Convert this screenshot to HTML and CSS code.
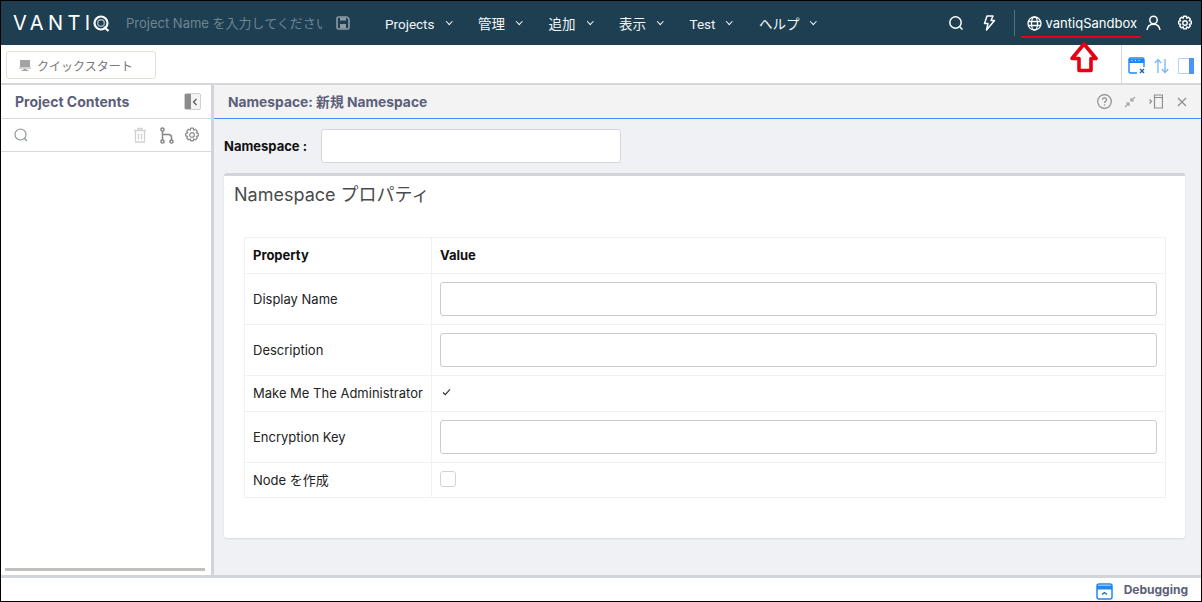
FILE: index.html
```html
<!DOCTYPE html>
<html lang="ja">
<head>
    <meta charset="UTF-8">
    <title>Namespace</title>
    <link rel="stylesheet" href="styles.css">
</head>
<body>
<div class="frame">
    <header class="topbar">
        <div class="logo">VANTI
            <svg class="logo-q" width="17" height="17" viewBox="0 0 17 17"><circle cx="8" cy="8" r="6.500" fill="none" stroke="#fff" stroke-width="2.200"/><circle cx="8" cy="8" r="3.300" fill="none" stroke="#9fb4bf" stroke-width="1.400"/><path d="M11 12l4.500 4" stroke="#fff" stroke-width="2.200"/></svg>
        </div>
        <input class="project-name" type="text" placeholder="Project Name を入力してください">
        <svg class="save-icon" width="14" height="14" viewBox="0 0 14 14"><path d="M1 2.500Q1 1 2.500 1H11l2 2v8.500Q13 13 11.500 13h-9Q1 13 1 11.500z" fill="none" stroke="#8b9ba5" stroke-width="1.600"/><path d="M4 1.500h6v3H4zM4 8h6v4.500H4z" fill="#8b9ba5"/></svg>
        <nav class="menu">
            <span class="menu-item">Projects<i class="caret"></i></span>
            <span class="menu-item">管理<i class="caret"></i></span>
            <span class="menu-item">追加<i class="caret"></i></span>
            <span class="menu-item">表示<i class="caret"></i></span>
            <span class="menu-item">Test<i class="caret"></i></span>
            <span class="menu-item">ヘルプ<i class="caret"></i></span>
        </nav>
        <div class="top-right">
            <svg class="ti-search" width="16" height="16" viewBox="0 0 16 16" fill="none" stroke="#fff" stroke-width="1.500"><circle cx="7.500" cy="7.500" r="5.700"/><path d="M11.700 11.700L14.500 14.500"/></svg>
            <svg class="ti-bolt" width="14" height="16" viewBox="0 0 14 16" fill="none" stroke="#fff" stroke-width="1.500" stroke-linejoin="round"><path d="M5 1h6L9 5.500h3.500L4.500 15l1.500-6.500H2.500z"/></svg>
            <span class="top-sep"></span>
            <svg class="ti-globe" width="15" height="15" viewBox="0 0 15 15" fill="none" stroke="#fff" stroke-width="1.300"><circle cx="7.500" cy="7.500" r="6.500"/><ellipse cx="7.500" cy="7.500" rx="3" ry="6.500"/><path d="M1 5.500h13M1 9.500h13"/></svg>
            <span class="ns-name">vantiqSandbox</span>
            <svg class="ti-user" width="15" height="16" viewBox="0 0 15 16" fill="none" stroke="#fff" stroke-width="1.500"><circle cx="7.500" cy="5" r="3.700"/><path d="M1 15c.5-3.500 3-5.800 6.500-5.800S13.500 11.500 14 15"/></svg>
            <svg class="ti-gear" width="16" height="16" viewBox="0 0 16 16" fill="none" stroke="#fff" stroke-width="1.400"><circle cx="8" cy="8" r="2.200"/><path d="M6.700 1.200h2.600l.4 2 1.700-1 1.900 1.900-1 1.700 2 .5v2.600l-2 .4 1 1.700-1.900 1.900-1.700-1-.4 2H6.700l-.4-2-1.800 1-1.800-1.900 1-1.700-2-.4V6.300l2-.5-1-1.700 1.800-1.900 1.800 1z" stroke-linejoin="round"/></svg>
        </div>
    </header>

    <div class="toolbar">
        <button class="quick-start">
            <svg width="12" height="13" viewBox="0 0 12 13" fill="#a3a3a3"><path d="M1 1h10v7H1z"/><path d="M0 8.500h12v1H0zM4.500 10h3v1h2v1h-7v-1h2z"/></svg>
            クイックスタート
        </button>
        <div class="toolbar-right">
            <svg width="17" height="17" viewBox="0 0 17 17" fill="none"><path d="M1 4h15" stroke="#1e88f5" stroke-width="4"/><path d="M3.500 3.500h1M7 3.500h1M10.500 3.500h1" stroke="#fff"/><path d="M9 16H2.500Q1 16 1 14.500v-12Q1 1 2.500 1h12Q16 1 16 2.500V10" stroke="#1e88f5" stroke-width="1.400"/><path d="M12 12l4 4M16 12l-4 4" stroke="#1565c0" stroke-width="1.400"/></svg>
            <svg width="15" height="16" viewBox="0 0 15 16" fill="none" stroke="#7cbcf5" stroke-width="1.400"><path d="M4 15V1.500M.8 5L4 1.500 7.200 5M11 1v13.500M7.800 11l3.200 3.500 3.200-3.500"/></svg>
            <svg width="16" height="16" viewBox="0 0 16 16"><path d="M.5.500h15v15H.5z" fill="#fff" stroke="#b5d2fa"/><path d="M11 0h5v16h-5z" fill="#4d94f7"/></svg>
        </div>
    </div>

    <div class="workspace">
        <aside class="side">
            <div class="side-title">
                <span>Project Contents</span>
                <span class="collapse-btn"><svg width="6" height="8" viewBox="0 0 6 8" fill="none" stroke="#555" stroke-width="1.200"><path d="M4.500 1L1.500 4l3 3"/></svg></span>
            </div>
            <div class="side-tools">
                <svg width="14" height="14" viewBox="0 0 14 14" fill="none" stroke="#8d9499" stroke-width="1.200"><circle cx="6.500" cy="6.500" r="5.500"/><path d="M10.500 10.500L13 13"/></svg>
                <span class="side-tools-right">
                    <svg class="tool-trash" width="14" height="16" viewBox="0 0 14 16" fill="none" stroke="#d2d2d2" stroke-width="1.300"><path d="M1 3.500h12M5 3.500V1.500h4v2M2.500 3.500V15h9V3.500M5.500 6.500v6M8.500 6.500v6"/></svg>
                    <svg width="14" height="17" viewBox="0 0 14 17" fill="none" stroke="#858585" stroke-width="1.500"><circle cx="2.500" cy="2.500" r="1.600"/><circle cx="2.500" cy="14.500" r="1.600"/><circle cx="11.500" cy="14.500" r="1.600"/><path d="M2.500 4v9M2.500 7.500h6q3 0 3 3V13"/></svg>
                    <svg class="tool-gear" width="16" height="16" viewBox="0 0 16 16" fill="none" stroke="#8a8a8a" stroke-width="1.200"><circle cx="8" cy="8" r="2.300"/><path d="M6.700 1.200h2.600l.4 2 1.700-1 1.900 1.900-1 1.700 2 .5v2.600l-2 .4 1 1.700-1.900 1.900-1.700-1-.4 2H6.700l-.4-2-1.800 1-1.800-1.900 1-1.700-2-.4V6.300l2-.5-1-1.700 1.800-1.900 1.800 1z" stroke-linejoin="round"/></svg>
                </span>
            </div>
            <div class="side-body"></div>
            <div class="side-scroll"></div>
        </aside>

        <main class="content">
            <div class="panel-head">
                <span class="panel-title">Namespace: 新規 Namespace</span>
                <span class="panel-icons">
                    <svg width="15" height="15" viewBox="0 0 15 15" fill="none" stroke="#8d8d8d" stroke-width="1.200"><circle cx="7.500" cy="7.500" r="6.800"/><path d="M5.500 5.800c0-2.600 4-2.600 4 0 0 1.500-2 1.500-2 3.200M7.500 10.300v1.300"/></svg>
                    <svg class="icon-shrink" width="12" height="12" viewBox="0 0 12 12" fill="none" stroke="#a0a0a0" stroke-width="1.200"><path d="M1 11l3.500-3.500M11 1L7.500 4.500M2 7h3v3M7 2v3h3"/></svg>
                    <svg width="14" height="15" viewBox="0 0 14 15" fill="none" stroke="#8d8d8d" stroke-width="1.200"><path d="M5.500 1h8v13h-8zM5.500 3.500h8"/><path d="M.5 5.500l2 2-2 2"/></svg>
                    <svg class="icon-close" width="10" height="10" viewBox="0 0 10 10" fill="none" stroke="#8d8d8d" stroke-width="1.200"><path d="M1 1l8 8M9 1l-8 8"/></svg>
                </span>
            </div>
            <div class="content-body">
                <div class="ns-row">
                    <label class="ns-label">Namespace :</label>
                    <input class="ns-input" type="text">
                </div>
                <section class="card">
                    <h2 class="card-title">Namespace プロパティ</h2>
                    <table class="props">
                        <thead>
                            <tr class="row-head"><th class="col-prop">Property</th><th>Value</th></tr>
                        </thead>
                        <tbody>
                            <tr class="row-input"><td>Display Name</td><td><input class="field" type="text"></td></tr>
                            <tr class="row-input"><td>Description</td><td><input class="field" type="text"></td></tr>
                            <tr class="row-small"><td>Make Me The Administrator</td><td><svg class="check" width="9" height="8" viewBox="0 0 9 8" fill="none" stroke="#333" stroke-width="1.100"><path d="M1 4.500L3.300 6.700 8 1.300"/></svg></td></tr>
                            <tr class="row-input"><td>Encryption Key</td><td><input class="field" type="text"></td></tr>
                            <tr class="row-small row-last"><td>Node を作成</td><td><span class="checkbox"></span></td></tr>
                        </tbody>
                    </table>
                </section>
            </div>
        </main>
    </div>

    <footer class="bottom">
        <svg class="debug-icon" width="17" height="17" viewBox="0 0 17 17" fill="none"><path d="M1 4.500h15" stroke="#1e88f5" stroke-width="4"/><rect x="1" y="1" width="15" height="15" rx="2" stroke="#1e88f5" stroke-width="1.500"/><path d="M6 11.500l2.500-2 2.500 2" stroke="#1565c0" stroke-width="1.300"/></svg>
        <span class="bottom-label">Debugging</span>
    </footer>

    <!-- red annotation over the screenshot -->
    <div class="mark-line"></div>
    <svg class="mark-arrow" width="28" height="31" viewBox="0 0 28 31" fill="#fff" stroke="#e60012" stroke-width="3.600" stroke-linejoin="round"><path d="M14 2L26 16.500h-5v12H9v-12H2z"/></svg>
</div>
</body>
</html>
```

FILE: styles.css
```css
* {
    box-sizing: border-box;
}

html, body {
    margin: 0;
    padding: 0;
    height: 100%;
    overflow: hidden;
}

body {
    font-family: Inter, "Noto Sans CJK JP", sans-serif;
    font-size: 13px;
    color: #222;
    background-color: #fff;
}

.frame {
    position: relative;
    width: 1202px;
    height: 602px;
    border: 1px solid #000;
    display: flex;
    flex-direction: column;
    overflow: hidden;
}

/* top bar */
.topbar {
    height: 44px;
    flex: none;
    background-color: #1d3f51;
    color: #fff;
    display: flex;
    align-items: center;
    padding-left: 12px;
}

.logo {
    width: 99px;
    font-size: 20px;
    font-weight: 400;
    letter-spacing: 4.4px;
    display: flex;
    align-items: center;
    flex: none;
    margin-top: -1px;
}

.logo-q {
    flex: none;
    margin-left: -2px;
    margin-top: 1px;
}

.project-name {
    width: 196px;
    margin-left: 14px;
    padding: 0;
    border: none;
    background: transparent;
    font-family: Inter, "Noto Sans CJK JP", sans-serif;
    font-size: 13px;
    flex: none;
}

.project-name::placeholder {
    color: #6f8591;
    opacity: 1;
}

.save-icon {
    margin-left: 14px;
    flex: none;
}

.menu {
    display: flex;
    margin-left: 35px;
    font-family: Roboto, "Noto Sans CJK JP", sans-serif;
    font-size: 13.500px;
    line-height: 18px;
    padding-top: 2px;
}

.menu-item {
    display: flex;
    align-items: center;
    color: #f2f4f5;
    margin-right: 27px;
}

.caret {
    width: 4.500px;
    height: 4.500px;
    border-right: 1.400px solid #fff;
    border-bottom: 1.400px solid #fff;
    transform: rotate(45deg);
    margin: -6px 0 0 12px;
}

.top-right {
    margin-left: auto;
    display: flex;
    align-items: center;
    padding-right: 8px;
}

.ti-bolt {
    margin-left: 18px;
}

.top-sep {
    width: 1px;
    height: 26px;
    background-color: #566f7c;
    margin: 0 12px 0 18px;
}

.ns-name {
    margin-left: 4px;
    font-size: 13px;
    color: #fff;
}

.ti-user {
    margin-left: 9px;
}

.ti-gear {
    margin-left: 16px;
}

/* toolbar */
.toolbar {
    height: 40px;
    flex: none;
    background-color: #fff;
    border-bottom: 2px solid #d7d7d7;
    display: flex;
    align-items: center;
    padding-left: 5px;
}

.quick-start {
    width: 150px;
    height: 28px;
    margin-top: 2px;
    background-color: #fff;
    border: 1px solid #dbe5d2;
    border-radius: 3px;
    font-family: Inter, "Noto Sans CJK JP", sans-serif;
    font-size: 12px;
    color: #777;
    display: flex;
    align-items: center;
    gap: 6px;
    padding: 0 0 0 12px;
}

.toolbar-right {
    margin-left: auto;
    height: 38px;
    width: 80px;
    border-left: 1px solid #d7d7d7;
    display: flex;
    align-items: center;
    gap: 9px;
    padding: 3px 0 0 6px;
}

/* main area */
.workspace {
    flex: 1;
    display: flex;
    min-height: 0;
}

.side {
    width: 213px;
    flex: none;
    background-color: #fff;
    border-right: 3px solid #d1d4db;
    display: flex;
    flex-direction: column;
}

.side-title {
    height: 34px;
    flex: none;
    border-bottom: 1px solid #d7dadd;
    display: flex;
    align-items: center;
    justify-content: space-between;
    padding: 0 10px 0 14px;
    font-weight: 700;
    font-size: 14px;
    color: #5b6079;
}

.collapse-btn {
    width: 17px;
    height: 17px;
    background: linear-gradient(to right, #8b8b8b 0 6px, #f4f4f4 6px);
    border: 1px solid #d0d0d0;
    border-radius: 2px;
    display: flex;
    align-items: center;
    justify-content: flex-end;
    padding-right: 2px;
}

.side-tools {
    height: 33px;
    flex: none;
    border-bottom: 1px solid #d7dadd;
    display: flex;
    align-items: center;
    padding: 0 11px 0 13px;
}

.side-tools-right {
    margin-left: auto;
    display: flex;
    align-items: center;
    gap: 11px;
}

.tool-trash {
    margin-right: 2px;
}

.tool-gear {
    margin-left: -1px;
}

.side-body {
    flex: 1;
}

.side-scroll {
    height: 3px;
    margin: 0 6px 4px 4px;
    background-color: #c0c0c0;
}

.content {
    flex: 1;
    min-width: 0;
    background-color: #f0f1f5;
    display: flex;
    flex-direction: column;
}

.panel-head {
    height: 34px;
    flex: none;
    background-color: #f3f3f4;
    border-bottom: 1px solid #4a8cf0;
    display: flex;
    align-items: center;
    padding: 0 14px;
}

.panel-title {
    font-weight: 700;
    font-size: 13.800px;
    color: #5b6079;
    padding-bottom: 2px;
}

.panel-icons {
    margin-left: auto;
    display: flex;
    align-items: center;
    gap: 13px;
}

.icon-shrink {
    margin-left: -1px;
}

.icon-close {
    margin-left: 1px;
}

.content-body {
    padding: 10px 16px 0 10px;
}

.ns-row {
    display: flex;
    align-items: center;
}

.ns-label {
    width: 97px;
    font-weight: 700;
    font-size: 13px;
    color: #111;
}

.ns-input {
    width: 300px;
    height: 34px;
    background-color: #fff;
    border: 1px solid #d6d8de;
    border-radius: 3px;
}

.card {
    margin-top: 10px;
    height: 365px;
    background-color: #fff;
    border-top: 3px solid #d1d4db;
    border-radius: 3px;
    box-shadow: 0 1px 2px rgba(0, 0, 0, 0.1);
    padding: 0 20px;
}

.card-title {
    margin: 8px 0 32px -10px;
    font-size: 18px;
    line-height: 21px;
    font-weight: 400;
    color: #4a4a4a;
}

.props {
    width: 922px;
    border-collapse: collapse;
    table-layout: fixed;
}

.props th, .props td {
    border: 1px solid #f1f1f3;
    padding: 0 8px;
    text-align: left;
    font-size: 13px;
    vertical-align: middle;
    color: #222;
}

.props th {
    font-weight: 700;
    color: #111;
    padding-bottom: 1px;
}

.col-prop {
    width: 187px;
}

.row-head {
    height: 36px;
}

.row-input {
    height: 51px;
}

.row-small {
    height: 36px;
}

.row-small td {
    padding-bottom: 2px;
}

.row-last {
    height: 35px;
}

.field {
    display: block;
    width: 717px;
    height: 34px;
    background-color: #fff;
    border: 1px solid #c9cad6;
    border-radius: 3px;
}

.check {
    display: block;
    margin: -2px 0 0 2px;
}

.checkbox {
    display: block;
    width: 16px;
    height: 16px;
    border: 1px solid #d3d4da;
    border-radius: 3px;
}

/* bottom bar */
.bottom {
    height: 26px;
    flex: none;
    background-color: #fff;
    border-top: 3px solid #d1d4db;
    display: flex;
    align-items: center;
    justify-content: flex-end;
    padding-right: 13px;
}

.debug-icon {
    margin-top: 3px;
}

.bottom-label {
    margin-left: 11px;
    font-weight: 700;
    font-size: 12px;
    color: #5b6079;
}

/* annotation */
.mark-line {
    position: absolute;
    left: 1020px;
    top: 35px;
    width: 120px;
    height: 2px;
    background-color: #e60012;
}

.mark-arrow {
    position: absolute;
    left: 1069px;
    top: 41px;
}
```
